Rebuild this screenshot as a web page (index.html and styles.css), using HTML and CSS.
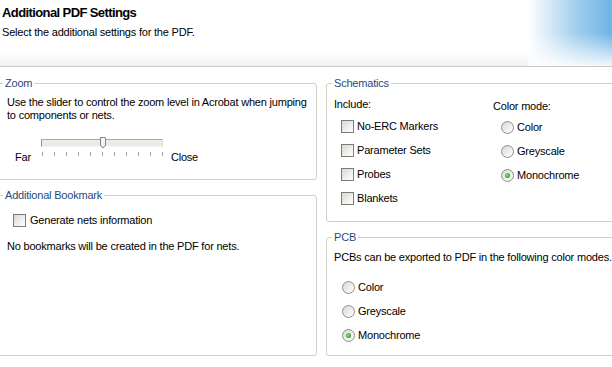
FILE: index.html
```html
<!DOCTYPE html>
<html lang="en">
<head>
  <meta charset="UTF-8" />
  <title>Additional PDF Settings</title>
  <link rel="stylesheet" href="styles.css">
</head>
<body>
  <div class="wizard">
    <header class="page-head">
      <div class="head-text">
        <h1>Additional PDF Settings</h1>
        <p>Select the additional settings for the PDF.</p>
      </div>
      <div class="head-glow"></div>
    </header>

    <div class="columns">
      <div class="col col-left">
        <fieldset class="group group-zoom">
          <legend>Zoom</legend>
          <p>Use the slider to control the zoom level in Acrobat when jumping to components or nets.</p>
          <div class="slider-row">
            <span class="slider-label">Far</span>
            <div class="slider">
              <div class="track"></div>
              <svg class="thumb" width="8" height="12" viewBox="0 0 8 12">
                <path d="M1.5 0.5 H6.5 V8 L4 11 L1.5 8 Z" fill="#f6f6f0" stroke="#7d878c" />
              </svg>
              <div class="ticks">
                <span></span><span></span><span></span><span></span><span></span><span></span>
                <span></span><span></span><span></span><span></span><span></span>
              </div>
            </div>
            <span class="slider-label">Close</span>
          </div>
        </fieldset>

        <fieldset class="group group-bookmark">
          <legend>Additional Bookmark</legend>
          <label class="option option-nets"><input type="checkbox" class="xp-check"> Generate nets information</label>
          <p class="note">No bookmarks will be created in the PDF for nets.</p>
        </fieldset>
      </div>

      <div class="col col-right">
        <fieldset class="group group-sch">
          <legend>Schematics</legend>
          <div class="sch-cols">
            <div class="sch-include">
              <div class="sub-head">Include:</div>
              <label class="option"><input type="checkbox" class="xp-check"> No-ERC Markers</label>
              <label class="option"><input type="checkbox" class="xp-check"> Parameter Sets</label>
              <label class="option"><input type="checkbox" class="xp-check"> Probes</label>
              <label class="option"><input type="checkbox" class="xp-check"> Blankets</label>
            </div>
            <div class="sch-mode">
              <div class="sub-head">Color mode:</div>
              <label class="option"><input type="radio" name="sch" class="xp-radio"> Color</label>
              <label class="option"><input type="radio" name="sch" class="xp-radio"> Greyscale</label>
              <label class="option"><input type="radio" name="sch" class="xp-radio" checked> Monochrome</label>
            </div>
          </div>
        </fieldset>

        <fieldset class="group group-pcb">
          <legend>PCB</legend>
          <p>PCBs can be exported to PDF in the following color modes.</p>
          <div class="pcb-modes">
            <label class="option"><input type="radio" name="pcb" class="xp-radio"> Color</label>
            <label class="option"><input type="radio" name="pcb" class="xp-radio"> Greyscale</label>
            <label class="option"><input type="radio" name="pcb" class="xp-radio" checked> Monochrome</label>
          </div>
        </fieldset>
      </div>
    </div>
  </div>
</body>
</html>
```

FILE: styles.css
```css
* {
  box-sizing: border-box;
  margin: 0;
  padding: 0;
}

body {
  font-family: 'Liberation Sans', Arial, sans-serif;
  font-size: 11px;
  line-height: 13px;
  letter-spacing: -0.2px;
  color: #000;
  background: #ffffff;
  width: 612px;
  height: 367px;
  overflow: hidden;
}

.page-head {
  display: flex;
  justify-content: space-between;
  height: 67px;
  background: linear-gradient(#ffffff 78%, #f1f1f1);
  border-bottom: 1px solid #c8c8c8;
}

.head-text {
  padding: 5px 0 0 2px;
}

.head-text h1 {
  font-size: 13px;
  line-height: 16px;
  font-weight: bold;
  letter-spacing: -0.6px;
  margin-bottom: 5px;
}

.head-glow {
  width: 84px;
  background:
    linear-gradient(to bottom, rgba(255, 255, 255, 0) 50%, rgba(255, 255, 255, 0.9) 100%),
    linear-gradient(to right, rgba(255, 255, 255, 0) 0%, #dcecf8 22%, #a6d0ef 55%, #6db3e6 100%);
}

.columns {
  display: flex;
  gap: 9px;
  padding-top: 10px;
}

.col {
  display: flex;
  flex-direction: column;
  gap: 9px;
  flex-shrink: 0;
}

.col-left {
  width: 320px;
  margin-left: -3px;
}

.col-right {
  width: 300px;
}

.group {
  border: 1px solid #d0d0c4;
  border-radius: 3px;
  min-width: 0;
}

.group legend {
  color: #1f4c7c;
  padding: 0 2px;
  line-height: 13px;
}

.col-left legend {
  margin-left: -4px;
}

.col-right legend {
  margin-left: -2px;
}

/* Zoom */
.group-zoom {
  height: 103px;
  padding: 6px 2px 0 9px;
}

.slider-row {
  display: flex;
  align-items: flex-start;
  margin-top: 15px;
  padding-left: 8px;
}

.slider-label {
  margin-top: 14px;
}

.slider {
  position: relative;
  width: 122px;
  margin: 0 8px 0 10px;
}

.track {
  height: 8px;
  margin-top: 2px;
  background: #ecece6;
  border-top: 1px solid #a9a9a3;
  border-left: 1px solid #8f8f8a;
  border-bottom: 1px solid #f4f4f0;
  border-right: 1px solid #e0e0da;
}

.thumb {
  position: absolute;
  left: 58px;
  top: 0;
}

.ticks {
  display: flex;
  justify-content: space-between;
  width: 121px;
  margin: 5px 0 0 1px;
}

.ticks span {
  width: 1px;
  height: 4px;
  background: #a4a4a4;
}

/* Bookmark */
.group-bookmark {
  height: 167px;
  padding: 12px 9px 0;
}

.option {
  display: flex;
  align-items: center;
  gap: 3px;
  height: 13px;
}

.option-nets {
  margin-left: 6px;
  gap: 4px;
}

.note {
  margin-top: 13px;
}

/* Checkbox and radio */
.xp-check,
.xp-radio {
  appearance: none;
  -webkit-appearance: none;
  width: 13px;
  height: 13px;
  flex-shrink: 0;
  margin: 0;
  border: 1px solid #7b7b7b;
  background: linear-gradient(135deg, #d9d9d2 0%, #eeeeea 55%, #ffffff 100%);
}

.xp-radio {
  border-radius: 50%;
  border-color: #8d8d8d;
  position: relative;
}

.xp-radio:checked::after {
  content: '';
  position: absolute;
  left: 3px;
  top: 3px;
  width: 5px;
  height: 5px;
  border-radius: 50%;
  background: radial-gradient(circle at 40% 40%, #8fe08f, #2a9c2a 70%);
}

/* Schematics */
.group-sch {
  height: 145px;
  padding: 8px 7px 0;
}

.sch-cols {
  display: flex;
}

.sch-include {
  width: 159px;
}

.sch-include .option {
  margin: 0 0 11px 7px;
}

.sch-include .sub-head {
  margin-bottom: 9px;
}

.sch-mode .sub-head {
  margin: 2px 0 8px;
}

.sch-mode .option {
  margin: 0 0 11px 8px;
}

/* PCB */
.group-pcb {
  height: 125px;
  padding: 7px 7px 0;
}

.pcb-modes {
  margin-top: 17px;
}

.pcb-modes .option {
  margin: 0 0 11px 8px;
}
```
